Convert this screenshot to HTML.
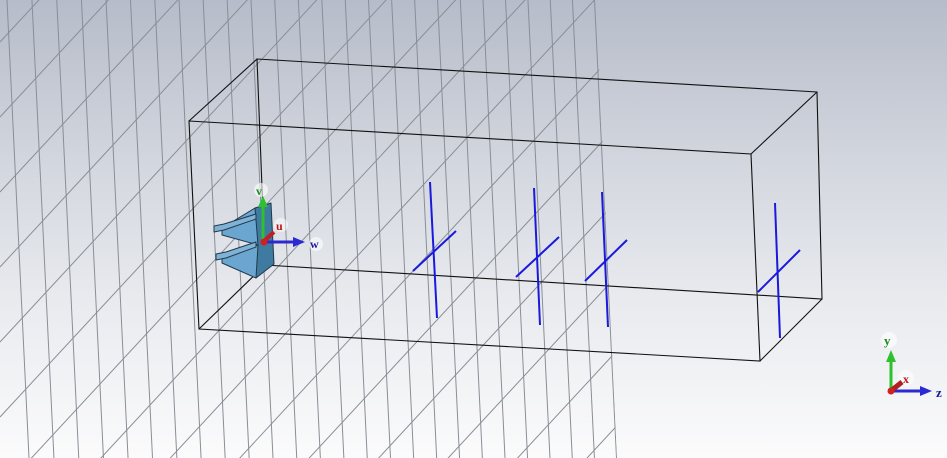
<!DOCTYPE html>
<html><head><style>
html,body{margin:0;padding:0;width:947px;height:458px;overflow:hidden}
body{background:linear-gradient(#b6bcc9 0%,#d2d6de 35%,#e8eaee 65%,#fbfbfc 100%)}
svg{position:absolute;left:0;top:0}
text{font-family:"Liberation Serif",serif;font-weight:bold}
</style></head><body>
<svg width="947" height="458" viewBox="0 0 947 458">
<defs><clipPath id="c"><polygon points="0,0 596,0 617,458 0,458"/></clipPath></defs>
<g id="grid" clip-path="url(#c)" stroke="#8a8e97" stroke-width="1" fill="none"></g>
<g stroke="#111" stroke-width="1.1" fill="none">
<polygon points="257,59 817,92 822,299 265,265"/>
<polygon points="189,121 751,154 760,361 199,329"/>
<line x1="189" y1="121" x2="257" y2="59"/>
<line x1="199" y1="329" x2="265" y2="265"/>
<line x1="751" y1="154" x2="817" y2="92"/>
<line x1="760" y1="361" x2="822" y2="299"/>
</g>
<g stroke="#1a1adc" stroke-width="2">
<line x1="430" y1="182" x2="437" y2="318"/><line x1="413" y1="271" x2="456" y2="231"/>
<line x1="534" y1="188" x2="540" y2="325"/><line x1="516" y1="277" x2="559" y2="237"/>
<line x1="602" y1="192" x2="608" y2="327"/><line x1="585" y1="281" x2="627" y2="240"/>
<line x1="775" y1="203" x2="780" y2="338"/><line x1="758" y1="292" x2="800" y2="250"/>
</g>
<g stroke="#22384a" stroke-width="1" stroke-linejoin="round">
<polygon points="255,208 271,203 274,264 256,278" fill="#3f7aa0"/>
<polygon points="222,228 255,208 258,245 222,235" fill="#6aa6cf"/>
<polygon points="222,256 258,245 256,278 222,263" fill="#6aa6cf"/>
<polygon points="214,226 224,224 256,214 256,219 224,230 214,232" fill="#7fb3d6"/>
<polygon points="216,254 226,252 256,242 256,247 226,258 216,260" fill="#7fb3d6"/>
</g>
<circle cx="261" cy="190" r="7" fill="#fff" opacity="0.6"/>
<circle cx="316" cy="244" r="7" fill="#fff" opacity="0.6"/>
<circle cx="281" cy="225" r="7" fill="#fff" opacity="0.5"/>
<line x1="263" y1="242" x2="263" y2="205" stroke="#2ec02e" stroke-width="3"/>
<polygon points="258,207 263,196 268,207" fill="#2ec02e"/>
<line x1="263" y1="242" x2="295" y2="242" stroke="#2a2ad0" stroke-width="3"/>
<polygon points="293,237 305,242 293,247" fill="#2a2ad0"/>
<line x1="264" y1="241" x2="274" y2="232" stroke="#c02020" stroke-width="4"/>
<circle cx="264" cy="242" r="3.5" fill="#d02020"/>
<text x="256" y="195" font-size="12" fill="#1a8a1a">v</text>
<text x="310" y="248" font-size="12" fill="#1a1aa0">w</text>
<text x="276" y="230" font-size="12" fill="#c01818">u</text>
<circle cx="889" cy="340" r="8" fill="#fff" opacity="0.6"/>
<circle cx="906" cy="378" r="8" fill="#fff" opacity="0.5"/>
<line x1="891" y1="391" x2="891" y2="360" stroke="#2ec02e" stroke-width="3"/>
<polygon points="886,362 891,350 896,362" fill="#2ec02e"/>
<line x1="891" y1="391" x2="922" y2="391" stroke="#2a2ad0" stroke-width="3"/>
<polygon points="920,386 932,391 920,396" fill="#2a2ad0"/>
<line x1="892" y1="390" x2="902" y2="382" stroke="#b02020" stroke-width="5"/>
<circle cx="891" cy="391" r="3.5" fill="#d02020"/>
<text x="884" y="345" font-size="13" fill="#1a8a1a">y</text>
<text x="936" y="397" font-size="13" fill="#1a1aa0">z</text>
<text x="903" y="383" font-size="12" fill="#c01818">x</text>
</svg>
<script>
var g=document.getElementById('grid'),s='';
for(var k=0;k<26;k++){var xt=7+k*25-k*k*0.06,xb=xt+22;s+='<line x1="'+xt+'" y1="0" x2="'+xb+'" y2="458"/>';}
for(var j=-8;j<16;j++){var y0=42+j*75;var sl=1.08;s+='<line x1="0" y1="'+y0+'" x2="'+(y0+460)/sl+'" y2="-460"/>';}
g.innerHTML=s;
</script>
</body></html>
